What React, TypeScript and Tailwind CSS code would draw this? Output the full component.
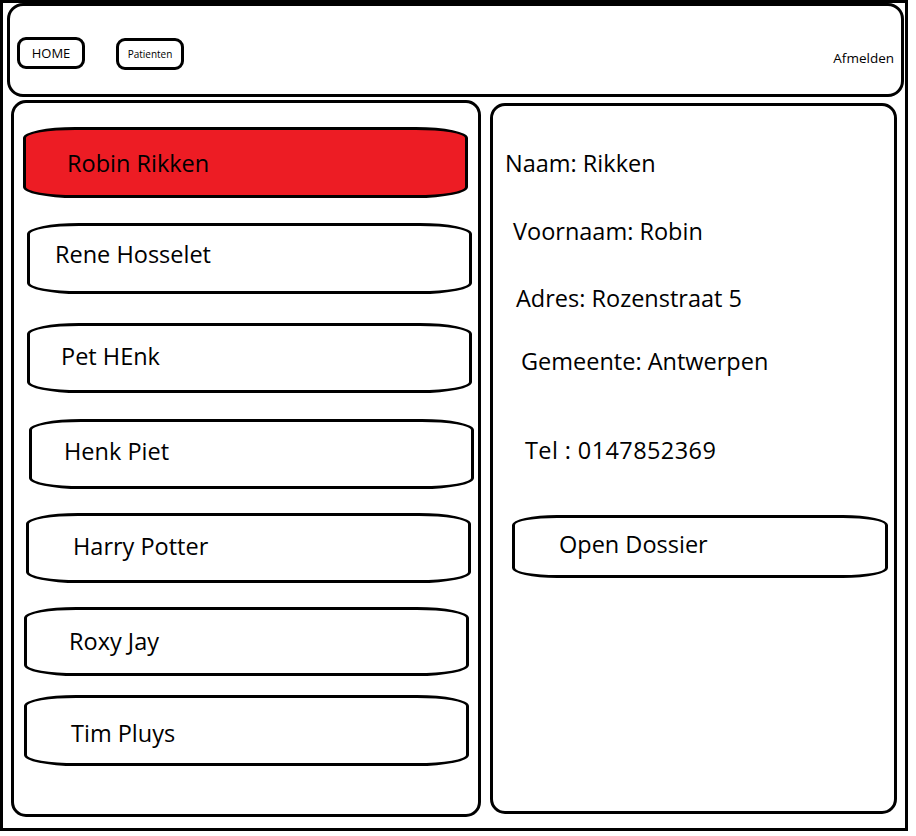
import React from "react";

const items = [
  { name: "Robin Rikken", cls: "ml-[9px] mt-[24px] h-[71px] pl-[41px] bg-[#ed1c24]" },
  { name: "Rene Hosselet", cls: "ml-[13px] mt-[25px] h-[71px] pl-[25px] pb-[10px] bg-white" },
  { name: "Pet HEnk", cls: "ml-[13px] mt-[29px] h-[70px] pl-[31px] pb-[4px] bg-white" },
  { name: "Henk Piet", cls: "ml-[15px] mt-[26px] h-[70px] pl-[32px] pb-[6px] bg-white" },
  { name: "Harry Potter", cls: "ml-[12px] mt-[24px] h-[70px] pl-[44px] pb-[4px] bg-white" },
  { name: "Roxy Jay", cls: "ml-[10px] mt-[24px] h-[69px] pl-[42px] pb-[2px] bg-white" },
  { name: "Tim Pluys", cls: "ml-[10px] mt-[19px] h-[71px] pl-[44px] pt-[4px] bg-white" },
];

export default function App() {
  return (
    <div className="w-[916px] h-[836px] bg-white font-['Open_Sans',sans-serif] text-black">
      <div className="w-[908px] h-[831px] border-[3px] border-black flex flex-col">
        {/* Header */}
        <div className="ml-[4px] w-[897px] h-[94px] border-[3px] border-black rounded-[16px] flex items-start pt-[31px] shrink-0">
          <button className="ml-[7px] w-[68px] h-[32px] border-[3px] border-black rounded-[9px] flex items-center justify-center text-[13px] leading-none">
            HOME
          </button>
          <button className="ml-[31px] mt-[1px] w-[68px] h-[32px] border-[3px] border-black rounded-[9px] flex items-center justify-center text-[10px] leading-none">
            Patienten
          </button>
          <div className="ml-auto mr-[7px] mt-[12px] text-[13.5px] leading-[18px]">Afmelden</div>
        </div>

        {/* Body */}
        <div className="flex items-start">
          {/* Left panel */}
          <div className="ml-[8px] mt-[3px] w-[470px] h-[717px] border-[3px] border-black rounded-[15px] flex flex-col">
            {items.map((it) => (
              <div
                key={it.name}
                className={`w-[445px] border-[3px] border-black rounded-[52px/11px] flex items-center text-[23.5px] leading-[24px] shrink-0 ${it.cls}`}
              >
                {it.name}
              </div>
            ))}
          </div>

          {/* Right panel */}
          <div className="ml-[9px] mt-[6px] w-[407px] h-[711px] border-[3px] border-black rounded-[15px] flex flex-col items-start text-[23.5px] leading-[24px]">
            <div className="ml-[12px] mt-[45px]">Naam: Rikken</div>
            <div className="ml-[20px] mt-[44px]">Voornaam: Robin</div>
            <div className="ml-[23px] mt-[43px]">Adres: Rozenstraat 5</div>
            <div className="ml-[28px] mt-[39px]">Gemeente: Antwerpen</div>
            <div className="ml-[32px] mt-[65px] tracking-[0.4px]">Tel : 0147852369</div>
            <button className="ml-[19px] mt-[53px] w-[376px] h-[63px] border-[3px] border-black rounded-[45px/10px] flex items-center pl-[44px] pb-[6px] text-[23.5px] leading-[24px]">
              Open Dossier
            </button>
          </div>
        </div>
      </div>
    </div>
  );
}
